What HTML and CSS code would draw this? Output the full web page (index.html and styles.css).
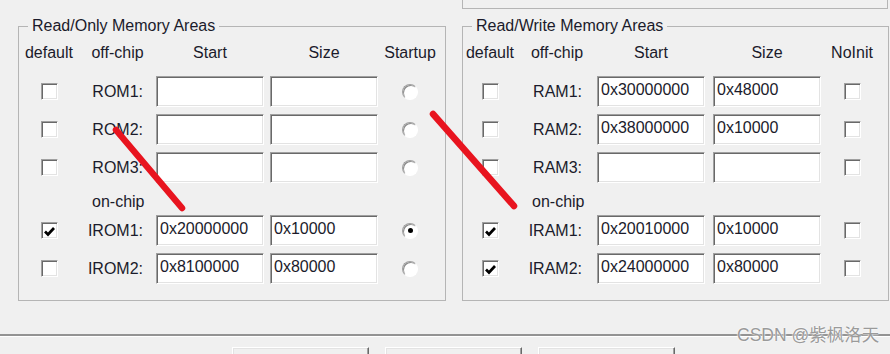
FILE: index.html
```html
<!DOCTYPE html>
<html lang="en">
<head>
    <meta charset="UTF-8">
    <title>Memory Areas</title>
    <link rel="stylesheet" href="styles.css">
</head>
<body>
    <div class="screen">
        <div class="top-strip">
            <div class="prev-box"></div>
        </div>

        <div class="groups">
            <fieldset class="group group-ro">
                <legend>Read/Only Memory Areas</legend>
                <div class="grid">
                    <span class="hd">default</span>
                    <span class="hd">off-chip</span>
                    <span class="hd">Start</span>
                    <span class="hd">Size</span>
                    <span class="hd">Startup</span>

                    <span class="cb"></span>
                    <span class="lbl">ROM1:</span>
                    <input class="fld" value="">
                    <input class="fld" value="">
                    <span class="rb"></span>

                    <span class="cb"></span>
                    <span class="lbl">ROM2:</span>
                    <input class="fld" value="">
                    <input class="fld" value="">
                    <span class="rb"></span>

                    <span class="cb"></span>
                    <span class="lbl">ROM3:</span>
                    <input class="fld" value="">
                    <input class="fld" value="">
                    <span class="rb"></span>

                    <span class="sub">on-chip</span>

                    <span class="cb"><svg viewBox="0 0 13 13"><polyline points="2,6.5 5,9.5 11,3"/></svg></span>
                    <span class="lbl">IROM1:</span>
                    <input class="fld" value="0x20000000">
                    <input class="fld" value="0x10000">
                    <span class="rb"><span class="dot"></span></span>

                    <span class="cb"></span>
                    <span class="lbl">IROM2:</span>
                    <input class="fld" value="0x8100000">
                    <input class="fld" value="0x80000">
                    <span class="rb"></span>
                </div>
            </fieldset>

            <fieldset class="group group-rw">
                <legend>Read/Write Memory Areas</legend>
                <div class="grid">
                    <span class="hd">default</span>
                    <span class="hd">off-chip</span>
                    <span class="hd">Start</span>
                    <span class="hd">Size</span>
                    <span class="hd">NoInit</span>

                    <span class="cb"></span>
                    <span class="lbl">RAM1:</span>
                    <input class="fld" value="0x30000000">
                    <input class="fld" value="0x48000">
                    <span class="cb"></span>

                    <span class="cb"></span>
                    <span class="lbl">RAM2:</span>
                    <input class="fld" value="0x38000000">
                    <input class="fld" value="0x10000">
                    <span class="cb"></span>

                    <span class="cb"></span>
                    <span class="lbl">RAM3:</span>
                    <input class="fld" value="">
                    <input class="fld" value="">
                    <span class="cb"></span>

                    <span class="sub">on-chip</span>

                    <span class="cb"><svg viewBox="0 0 13 13"><polyline points="2,6.5 5,9.5 11,3"/></svg></span>
                    <span class="lbl">IRAM1:</span>
                    <input class="fld" value="0x20010000">
                    <input class="fld" value="0x10000">
                    <span class="cb"></span>

                    <span class="cb"><svg viewBox="0 0 13 13"><polyline points="2,6.5 5,9.5 11,3"/></svg></span>
                    <span class="lbl">IRAM2:</span>
                    <input class="fld" value="0x24000000">
                    <input class="fld" value="0x80000">
                    <span class="cb"></span>
                </div>
            </fieldset>
        </div>

        <div class="sep"></div>

        <div class="buttons">
            <button class="btn"></button>
            <button class="btn"></button>
            <button class="btn"></button>
        </div>

        <!-- watermark and red marks lie over the dialog -->
        <span class="watermark">CSDN @紫枫洛天</span>
        <svg class="marks" viewBox="0 0 890 354">
            <line x1="116" y1="130" x2="182" y2="208"/>
            <line x1="433" y1="114" x2="514" y2="206"/>
        </svg>
    </div>
</body>
</html>
```

FILE: styles.css
```css
body {
    margin: 0;
    background: #f0f0f0;
    font: 16px/18px "Liberation Sans", "Noto Sans CJK SC", sans-serif;
    color: #1b1b2b;
}

.screen {
    position: relative;
    width: 890px;
    height: 354px;
    overflow: hidden;
}

.top-strip {
    height: 9px;
}

.prev-box {
    margin-left: 462px;
    width: 426px;
    height: 9px;
    box-sizing: border-box;
    border: 1px solid #b5b5b5;
    border-top: none;
}

.groups {
    display: flex;
    gap: 16px;
    padding-left: 18px;
    margin-top: 8px;
}

.group {
    margin: 0;
    padding: 0 0 16px 0;
    border: 1px solid #b5b5b5;
    box-sizing: border-box;
    min-width: 0;
}

.group legend {
    margin-left: 9px;
    padding: 0 4px;
    line-height: 18px;
}

.group-ro {
    width: 428px;
    --c1: 60px;
    --c2: 65px;
    --c5: 52px;
    --gap: 6px;
}

.group-rw {
    width: 427px;
    --c1: 54px;
    --c2: 64px;
    --c5: 46px;
    --gap: 8px;
}

.grid {
    display: grid;
    grid-template-columns: var(--c1) var(--c2) 108px 108px var(--c5);
    grid-template-rows: 34px repeat(3, 31px) 18px 31px 31px;
    column-gap: var(--gap);
    row-gap: 7px;
    align-items: center;
}

.hd {
    align-self: end;
    padding-bottom: 7px;
    text-align: center;
    white-space: nowrap;
}

.lbl {
    text-align: right;
    padding-right: 7px;
}

.sub {
    grid-column: 2 / -1;
    padding: 3px 0 0 7px;
    margin-bottom: -3px;
}

.fld {
    width: 100%;
    height: 31px;
    box-sizing: border-box;
    margin: 0;
    padding: 0 0 3px 3px;
    border: 1px solid;
    border-color: #a0a0a0 #fff #fff #a0a0a0;
    box-shadow: inset 1px 1px #696969, inset -1px -1px #e3e3e3;
    background: #fff;
    font: inherit;
    color: inherit;
    outline: none;
}

.cb {
    justify-self: center;
    width: 17px;
    height: 17px;
    box-sizing: border-box;
    border: 1px solid;
    border-color: #a0a0a0 #fff #fff #a0a0a0;
    box-shadow: inset 1px 1px #696969, inset -1px -1px #e3e3e3;
    background: #fff;
    display: flex;
    align-items: center;
    justify-content: center;
}

.cb svg {
    width: 13px;
    height: 13px;
    margin-top: 1px;
}

.cb polyline {
    fill: none;
    stroke: #000;
    stroke-width: 2.7;
}

.rb {
    justify-self: center;
    width: 16px;
    height: 16px;
    box-sizing: border-box;
    border-radius: 50%;
    border: 1px solid;
    border-color: #a0a0a0 #fff #fff #a0a0a0;
    box-shadow: inset 1px 1px #8a8a8a;
    background: #fff;
    display: flex;
    align-items: center;
    justify-content: center;
}

.dot {
    width: 5px;
    height: 5px;
    border-radius: 50%;
    background: #000;
}

.sep {
    margin-top: 33px;
    height: 2px;
    background: #939393;
    border-bottom: 1px solid #fff;
}

.buttons {
    display: flex;
    gap: 16px;
    padding-left: 232px;
    margin-top: 10px;
}

.btn {
    width: 137px;
    height: 30px;
    padding: 0;
    border: 1px solid;
    border-color: #fff #696969 #696969 #fff;
    box-shadow: inset -1px -1px #a0a0a0, inset 1px 1px #e3e3e3;
    background: #f0f0f0;
}

.watermark {
    position: absolute;
    left: 737px;
    top: 325px;
    font-size: 17.5px;
    line-height: 20px;
    color: #9a9a9a;
    text-shadow: 0 0 2px #fff, 0 0 1px #fff;
    white-space: nowrap;
}

.marks {
    position: absolute;
    left: 0;
    top: 0;
    width: 890px;
    height: 354px;
    pointer-events: none;
}

.marks line {
    stroke: #e8141f;
    stroke-width: 6.5;
    stroke-linecap: round;
}
```
